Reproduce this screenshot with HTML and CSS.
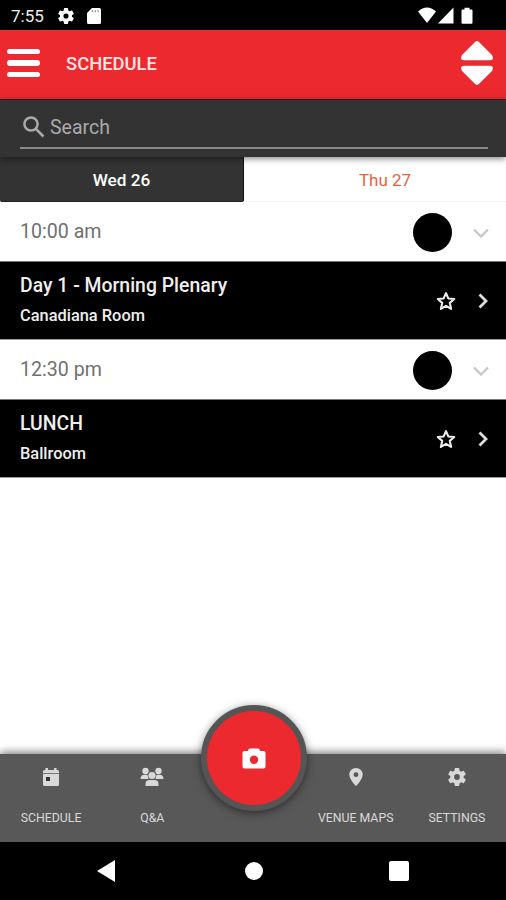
FILE: index.html
```html
<!DOCTYPE html>
<html lang="en">
<head>
<meta charset="utf-8">
<title>Schedule</title>
<link rel="stylesheet" href="styles.css">
</head>
<body>
<svg width="0" height="0" class="defs">
  <symbol id="gear" viewBox="2 2 20 20"><path d="M19.43 12.98c.04-.32.07-.64.07-.98s-.03-.66-.07-.98l2.11-1.65c.19-.15.24-.42.12-.64l-2-3.46c-.12-.22-.39-.3-.61-.22l-2.49 1c-.52-.4-1.08-.73-1.69-.98l-.38-2.65A.49.49 0 0 0 14 2h-4c-.25 0-.46.18-.49.42l-.38 2.65c-.61.25-1.17.59-1.69.98l-2.49-1c-.23-.09-.49 0-.61.22l-2 3.46c-.13.22-.07.49.12.64l2.11 1.65c-.04.32-.07.65-.07.98s.03.66.07.98l-2.11 1.65c-.19.15-.24.42-.12.64l2 3.46c.12.22.39.3.61.22l2.49-1c.52.4 1.08.73 1.69.98l.38 2.65c.03.24.24.42.49.42h4c.25 0 .46-.18.49-.42l.38-2.65c.61-.25 1.17-.59 1.69-.98l2.49 1c.23.09.49 0 .61-.22l2-3.46c.12-.22.07-.49-.12-.64zM12 15.2a3.2 3.2 0 1 1 0-6.4 3.2 3.2 0 0 1 0 6.4z"/></symbol>
  <symbol id="star" viewBox="0 0 18 18"><path d="M9 1.9l2.1 4.8 5.3.5-4 3.5 1.2 5.4L9 13.300l-4.600 2.800 1.200-5.400-4-3.500 5.300-.5z" fill="none" stroke="currentColor" stroke-width="1.9" stroke-linejoin="round"/></symbol>
</svg>
<header class="status">
  <span class="clock">7:55</span>
  <svg class="st-gear"><use href="#gear"/></svg>
  <svg class="st-card" viewBox="0 0 14 16"><path d="M5 0h7.500Q14 0 14 1.500v13Q14 16 12.500 16h-11Q0 16 0 14.500V5z"/><path d="M5.500 2.200v2M8.300 2.200v2M11.100 2.200v2" stroke="#888" stroke-width="1.200"/></svg>
  <svg class="st-right" viewBox="0 0 56 18"><path d="M0 4.500Q9-3.500 18 4.500L9 16zM35.500.5V16.500H20zM44.500 2.500h2V.8h5v1.700h2q1 0 1 1v12.300q0 1-1 1h-9q-1 0-1-1V3.500q0-1 1-1z"/></svg>
</header>
<div class="appbar">
  <div class="burger"><i></i><i></i><i></i></div>
  <h1>SCHEDULE</h1>
  <svg class="sort" viewBox="0 0 34 46"><path d="M14.800 2.200Q17 0 19.200 2.200L32 15Q34.500 20 30 20.300H4Q-.5 20 2 15zM14.800 43.800Q17 46 19.200 43.800L32 31Q34.500 26 30 25.700H4Q-.5 26 2 31z"/></svg>
</div>
<div class="search">
  <div class="field">
    <svg viewBox="0 0 22 22"><circle cx="8" cy="8" r="6.600"/><path d="M13 13l7.500 7.500"/></svg>
    <span>Search</span>
  </div>
</div>
<nav class="days"><a class="day on">Wed 26</a><a class="day">Thu 27</a></nav>
<main>
  <div class="slot"><span class="time">10:00 am</span><i class="dot"></i><svg class="down" viewBox="0 0 16 10"><path d="M1 1.500l7 7 7-7"/></svg></div>
  <div class="event"><div class="info"><b class="title">Day 1 - Morning Plenary</b><b class="place">Canadiana Room</b></div><svg class="star"><use href="#star"/></svg><svg class="next" viewBox="0 0 10 16"><path d="M1.500 1.500L8 8l-6.500 6.500"/></svg></div>
  <div class="slot"><span class="time">12:30 pm</span><i class="dot"></i><svg class="down" viewBox="0 0 16 10"><path d="M1 1.500l7 7 7-7"/></svg></div>
  <div class="event"><div class="info"><b class="title">LUNCH</b><b class="place">Ballroom</b></div><svg class="star"><use href="#star"/></svg><svg class="next" viewBox="0 0 10 16"><path d="M1.500 1.500L8 8l-6.500 6.500"/></svg></div>
</main>
<nav class="tabs">
  <a class="tab"><svg viewBox="0 0 18 20"><path d="M3.500 1h2.500v2h6V1h2.500v2H15.500Q17 3 17 4.500V6.300H1V4.500Q1 3 2.500 3h1zM1 7h16V17.500Q17 19 15.500 19h-13Q1 19 1 17.500z"/><rect x="4" y="10" width="4" height="4" fill="#333"/></svg><span>SCHEDULE</span></a>
  <a class="tab"><svg class="people" viewBox="0 0 24 20"><circle cx="5.500" cy="4" r="3.200"/><circle cx="18.500" cy="4" r="3.200"/><path d="M.5 12Q.5 7.700 4.500 7.700h2Q8 7.700 8 9.500L8.500 12zM23.500 12q0-4.300-4-4.300h-2Q16 7.700 16 9.500l-.5 2.500z"/><circle cx="12" cy="8.500" r="3.600"/><path d="M5.500 19V17Q5.500 13 9.500 13h5q4 0 4 4v2z"/></svg><span>Q&amp;A</span></a>
  <span class="gap"><span class="fab"><svg viewBox="0 0 24 21"><path fill-rule="evenodd" d="M8 .5h8q1 0 1.500 1L18 3h3.500q2 0 2 2v13.500q0 2-2 2h-19q-2 0-2-2V5q0-2 2-2H6l.5-1.500Q7 .5 8 .5zM12 7.500a4.200 4.200 0 1 0 0 8.400 4.200 4.200 0 0 0 0-8.400z"/></svg></span></span>
  <a class="tab right"><svg viewBox="0 0 18 20"><path fill-rule="evenodd" d="M9 1C5 1 2.300 4 2.300 7.500 2.300 12.500 9 19 9 19s6.700-6.500 6.700-11.500C15.700 4 13 1 9 1zm0 4.300a2.400 2.400 0 1 1 0 4.800 2.400 2.400 0 0 1 0-4.800z"/></svg><span>VENUE MAPS</span></a>
  <a class="tab right"><svg><use href="#gear"/></svg><span>SETTINGS</span></a>
</nav>
<footer class="system">
  <svg viewBox="0 0 18 22"><path d="M18 0v22L0 11z"/></svg>
  <svg class="home" viewBox="0 0 18 18"><circle cx="9" cy="9" r="9"/></svg>
  <svg class="recent" viewBox="0 0 20 20"><rect width="20" height="20" rx="2"/></svg>
</footer>
</body>
</html>
```
FILE: styles.css
```css
* { box-sizing: border-box; }
body { margin: 0; height: 900px; display: flex; flex-direction: column; overflow: hidden; background: #fff; font-family: Roboto, "Liberation Sans", sans-serif; }
.defs { position: absolute; }
svg { display: block; flex: none; fill: currentColor; }
.status { height: 30px; flex: none; background: #000; color: #fff; display: flex; align-items: center; padding: 1px 32px 0 11px; }
.clock { font-size: 17px; width: 47px; line-height: 30px; color: #eee; }
.st-gear { width: 16px; height: 16px; }
.st-card { width: 14px; height: 16px; margin-left: 13px; }
.st-right { width: 56px; height: 18px; margin-left: auto; }
.appbar { height: 69px; flex: none; background: #ec292e; color: #fff; display: flex; align-items: center; padding: 0 12px 0 7px; }
.burger { width: 33px; display: grid; gap: 6px; margin-top: -3px; }
.burger i { height: 5.5px; border-radius: 3px; background: #fff; }
h1 { margin: -1px 0 0 26px; font-size: 18.4px; font-weight: 500; color: #ffe5e5; line-height: 24px; }
.sort { width: 34px; height: 46px; margin-left: auto; margin-top: -3px; }
.search { height: 58px; flex: none; position: relative; z-index: 2; background: #333; padding: 10px 18px 0 20px; box-shadow: 0 2px 6px rgba(0,0,0,.45); border-top: 1px solid #202020; }
.field { height: 39px; border-bottom: 2px solid #8a8a8a; display: flex; align-items: center; padding: 0 0 3px 3px; color: #aaa; font-size: 19.5px; }
.field svg { width: 22px; height: 22px; margin-right: 5px; fill: none; stroke: #aaa; stroke-width: 2.5; }
.days { height: 45px; flex: none; display: flex; }
.day { width: 262px; text-align: center; font-size: 17px; line-height: 46px; color: #e3653f; padding-left: 20px; border-bottom: 1px solid #f4f4f4; }
.day.on { width: 244px; background: #333; color: #fff; font-weight: 500; padding: 0; border-radius: 0 0 2px 2px; border-right: 1px solid #111; border-bottom: 1px solid #222; font-size: 17.2px; }
main { flex: 1; }
.slot { height: 59px; display: flex; align-items: center; padding: 1px 17px 0 20px; }
.time { font-size: 19.6px; color: #707070; margin-top: -2px; }
.dot { width: 39px; height: 39px; border-radius: 50%; background: #000; margin-left: auto; }
.down { width: 16px; height: 10px; margin: 1px 0 0 21px; fill: none; stroke: #c8c8c8; stroke-width: 2.4; }
.event { height: 79px; background: #000; color: #eee; display: flex; align-items: center; padding: 0 18px 0 20px; border-top: 1px solid #777; border-bottom: 1px solid #999; }
.info { flex: 1; display: grid; padding-top: 3px; }
.title { font-size: 19.4px; font-weight: 500; line-height: 28px; }
.place { font-size: 16.4px; font-weight: 500; line-height: 32px; }
.star { width: 20px; height: 20px; }
.next { width: 10px; height: 16px; margin-left: 22px; fill: none; stroke: #ddd; stroke-width: 2.8; }
.tabs { height: 88px; flex: none; background: #585858; display: grid; grid-template-columns: repeat(5, 1fr); box-shadow: 0 -2px 8px rgba(0,0,0,.5); position: relative; }
.tab { display: flex; flex-direction: column; align-items: center; padding: 13px 0 0 1px; color: #d8d8d8; font-size: 12.3px; white-space: nowrap; }
.tab.right { padding-left: 3px; }
.tab svg { width: 18px; height: 20px; margin-bottom: 22px; }
.tab .people { width: 24px; }
.tab span { line-height: 18px; }
.gap { position: relative; }
.fab { position: absolute; left: -1px; top: -49px; width: 106px; height: 106px; border: 6px solid #555; border-radius: 50%; background: #ec292e; color: #fff; display: grid; place-items: center; box-shadow: 0 2px 9px rgba(0,0,0,.5); }
.fab svg { width: 24px; height: 21px; }
.system { height: 58px; flex: none; position: relative; background: #000; color: #fff; display: flex; align-items: center; padding-left: 97px; }
.system svg { width: 18px; height: 22px; }
.system .home { height: 18px; margin-left: 130px; }
.system .recent { width: 20px; height: 20px; margin-left: 126px; }
```
